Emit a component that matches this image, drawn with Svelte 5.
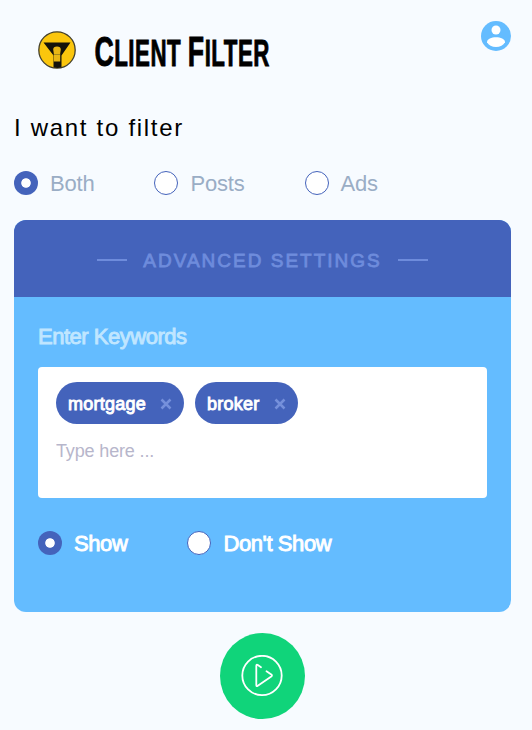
<script>
    const targets = ['Both', 'Posts', 'Ads']
    const modes = ['Show', "Don't Show"]

    let target = 'Both'
    let mode = 'Show'
    let keyword = ''
    let keywords = ['mortgage', 'broker']

    function addKeyword(e) {
        if (e.key !== 'Enter' || !keyword.trim()) return
        keywords = [...keywords, keyword.trim()]
        keyword = ''
    }

    function removeKeyword(word) {
        keywords = keywords.filter(k => k !== word)
    }
</script>

<main>
    <header>
        <svg class="logo" width="250" height="64" viewBox="0 -10 250 64" role="img" aria-label="Client Filter">
            <circle cx="21" cy="22" r="18.2" fill="#fbc60d" stroke="#44402c" stroke-width="1.3" />
            <path d="M7.500 14.500h27L25.500 27.500v12a18 18 0 0 1-8 0v-12z" fill="#15130b" />
            <path d="M17.200 21.500q0-3 3.800-3t3.800 3l-.6 4v8h-6.400v-8z" fill="#e9b715" />
            <path d="M18 26.500h6" stroke="#a58a1c" />
            <text class="wordmark" transform="translate(58.500 37.600) scale(.62 1)">
                <tspan class="cap">C</tspan>LIENT <tspan class="cap">F</tspan>ILTER
            </text>
        </svg>
        <button class="account" aria-label="Account">
            <svg width="30" height="30" viewBox="0 0 30 30">
                <circle cx="15" cy="15" r="15" fill="#64bcff" />
                <circle cx="15" cy="9" r="4.500" fill="#fff" />
                <path d="M6 21.300c0-3.300 4.500-5 9-5s9 1.700 9 5c-1.500 2.900-5 4.700-9 4.700s-7.500-1.800-9-4.700z" fill="#fff" />
            </svg>
        </button>
    </header>

    <h1>I want to filter</h1>

    <div class="options">
        {#each targets as option}
            <label>
                <input type="radio" name="target" value={option} bind:group={target} />
                <span>{option}</span>
            </label>
        {/each}
    </div>

    <section>
        <h2><span>ADVANCED SETTINGS</span></h2>
        <div class="settings">
            <h3>Enter Keywords</h3>
            <div class="keywords">
                <div class="chips">
                    {#each keywords as word}
                        <span class="chip">
                            {word}
                            <button aria-label="Remove {word}" on:click={() => removeKeyword(word)}>
                                <svg width="12" height="12" viewBox="0 0 12 12">
                                    <path d="M1.500 1.500l9 9m0-9l-9 9" />
                                </svg>
                            </button>
                        </span>
                    {/each}
                </div>
                <input class="entry" type="text" placeholder="Type here ..." bind:value={keyword} on:keydown={addKeyword} />
            </div>
            <div class="options bold">
                {#each modes as option}
                    <label>
                        <input type="radio" name="mode" value={option} bind:group={mode} />
                        <span>{option}</span>
                    </label>
                {/each}
            </div>
        </div>
    </section>

    <button class="play" aria-label="Start filter">
        <svg width="43" height="42" viewBox="0 0 43 42">
            <circle cx="21" cy="20.500" r="19.700" />
            <path d="M20 12.200l-3.200-2.200q-1.500-.8-1.500 1v19q0 1.800 1.500.8l13.500-9.400q1.300-1 0-2l-4.800-3.200" />
        </svg>
    </button>
</main>

<style>
    :global(body) {
        background: #f7fbff;
    }

    main {
        box-sizing: border-box;
        height: 730px;
        padding: 21px 21px 0 14px;
        overflow: hidden;
        display: flex;
        flex-direction: column;
        font-family: "Liberation Sans", Arial, sans-serif;
    }

    header {
        display: flex;
        justify-content: space-between;
        align-items: flex-start;
        height: 84px;
    }

    .logo {
        margin: -3px 0 0 22px;
    }

    .wordmark {
        font-size: 36px;
        font-weight: bold;
        letter-spacing: 0.800px;
        stroke: #000;
        stroke-width: 0.900px;
    }

    .cap {
        font-size: 43px;
    }

    button {
        border: 0;
        padding: 0;
        background: none;
        cursor: pointer;
        font: inherit;
    }

    .account, .account svg {
        display: block;
    }

    h1, h2, h3 {
        margin: 0;
        font-weight: normal;
    }

    h1 {
        height: 66px;
        line-height: 46px;
        font-size: 24px;
        letter-spacing: 1.700px;
        color: #000;
    }

    .options {
        display: flex;
        gap: 60px;
        height: 24px;
    }

    label {
        display: flex;
        align-items: center;
        gap: 12px;
        font-size: 22px;
        line-height: 24px;
        letter-spacing: -0.200px;
        color: #9aadc5;
        white-space: nowrap;
    }

    label span {
        padding-top: 2px;
    }

    input[type="radio"] {
        appearance: none;
        box-sizing: border-box;
        width: 24px;
        height: 24px;
        margin: 0;
        border: 1px solid #4463bb;
        border-radius: 50%;
        background: #fff;
    }

    input[type="radio"]:checked {
        border: 0;
        background: radial-gradient(circle, #fff 4.300px, #4463bb 5.200px);
    }

    section {
        height: 392px;
        margin-top: 25px;
        border-radius: 12px;
        overflow: hidden;
        background: #64bcff;
    }

    h2 {
        display: flex;
        align-items: center;
        justify-content: center;
        gap: 16px;
        height: 77px;
        background: #4463bb;
        color: #6e8cdc;
        font-size: 19px;
        letter-spacing: 2px;
        -webkit-text-stroke: 0.800px #6e8cdc;
    }

    h2 span {
        padding-top: 4px;
    }

    h2::before, h2::after {
        content: "";
        width: 30px;
        height: 2px;
        margin-top: 2px;
        background: #6e8cdc;
    }

    .settings {
        padding: 26px 24px 0;
    }

    h3 {
        height: 44px;
        line-height: 28px;
        font-size: 22px;
        letter-spacing: -0.480px;
        color: #c0e6ff;
        -webkit-text-stroke: 0.900px #c0e6ff;
    }

    .keywords {
        box-sizing: border-box;
        height: 131px;
        padding: 15px 18px;
        border-radius: 4px;
        background: #fff;
    }

    .chips {
        display: flex;
        gap: 11px;
    }

    .chip {
        display: flex;
        align-items: center;
        gap: 14px;
        height: 42px;
        padding: 2px 12px 0;
        box-sizing: border-box;
        border-radius: 21px;
        background: #4463bb;
        color: #fff;
        font-size: 18px;
        letter-spacing: 0.250px;
        -webkit-text-stroke: 0.900px #fff;
    }

    .chip svg {
        display: block;
        stroke: #7590db;
        stroke-width: 2.500;
    }

    .entry {
        display: block;
        width: 100%;
        height: 30px;
        margin-top: 12px;
        padding: 0;
        border: 0;
        outline: 0;
        font: 18px "Liberation Sans", Arial, sans-serif;
        letter-spacing: -0.150px;
    }

    .entry::placeholder {
        color: #b7b6cb;
    }

    .bold {
        margin-top: 33px;
    }

    .bold label {
        color: #fff;
        letter-spacing: -0.400px;
        -webkit-text-stroke: 0.900px #fff;
    }

    .play {
        display: flex;
        align-items: center;
        justify-content: center;
        align-self: center;
        flex: none;
        width: 85px;
        height: 86px;
        margin-top: 21px;
        border-radius: 50%;
        background: #10d47a;
    }

    .play svg {
        fill: none;
        stroke: #fff;
        stroke-width: 1.800;
        stroke-linecap: round;
        stroke-linejoin: round;
    }
</style>
